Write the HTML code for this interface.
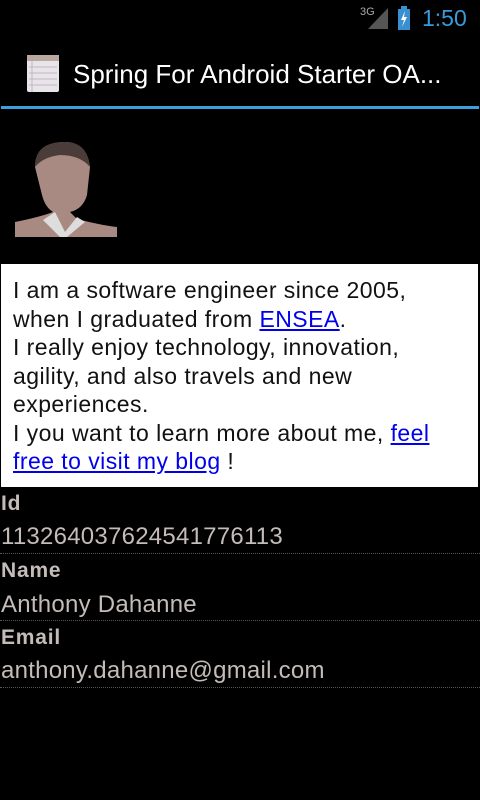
<!DOCTYPE html>
<html><head><style>
body{margin:0;width:480px;height:800px;background:#000;overflow:hidden;font-family:"Liberation Sans",sans-serif;position:relative}
.a{position:absolute;white-space:nowrap}
.box{position:absolute;left:1px;top:264px;width:477px;height:223px;background:#fff}
.box p{margin:0;position:absolute;left:12px;top:12px;font-size:23px;line-height:28.5px;color:#111;white-space:nowrap;letter-spacing:0.45px}
.box a{color:#0000ee;text-decoration:underline}
.lab{font-size:21px;font-weight:bold;color:#c4bcb8;left:1px;letter-spacing:0.8px}
.val{font-size:24px;color:#c4bcb8;left:1px;letter-spacing:0.25px}
.dot{position:absolute;left:0;width:480px;border-top:1px dotted #555}
</style></head><body>
<div class="a" style="left:360px;top:6px;font-size:11px;color:#aaa">3G</div>
<svg class="a" style="left:367px;top:7px" width="22" height="22"><polygon points="21,1 21,22 1,22" fill="#555"/></svg>
<svg class="a" style="left:397px;top:6px" width="14" height="24"><rect x="4" y="0" width="6" height="3" fill="#3a8fd0"/><rect x="1" y="3" width="12" height="21" fill="#3a8fd0"/><path d="M8 5 L4 14 L7 14 L5 21 L10 11 L7 11 Z" fill="#fff"/></svg>
<div class="a" style="left:422px;top:5px;font-size:23px;color:#3a9ad9">1:50</div>
<svg class="a" style="left:27px;top:55px" width="33" height="38"><rect x="0" y="0" width="32" height="37" rx="2" fill="#e8e4ea"/><rect x="0" y="0" width="32" height="6" fill="#b8a8a0"/><g stroke="#bbb" stroke-width="1"><line x1="2" y1="12" x2="30" y2="12"/><line x1="2" y1="18" x2="30" y2="18"/><line x1="2" y1="24" x2="30" y2="24"/><line x1="2" y1="30" x2="30" y2="30"/><line x1="5" y1="6" x2="5" y2="37"/></g></svg>
<div class="a" style="left:73px;top:59px;font-size:26px;color:#fff">Spring For Android Starter OA...</div>
<div class="a" style="left:1px;top:106px;width:478px;height:3px;background:#3aa0dc"></div>
<svg class="a" style="left:15px;top:137px" width="102" height="100"><path d="M20 30 Q20 5 50 5 Q72 5 75 30 L72 58 Q68 72 55 75 L62 82 Q85 88 102 90 L102 100 L0 100 L0 85 Q25 80 38 75 Q30 70 27 58 Z" fill="#a88a82"/><path d="M20 30 Q20 5 50 5 Q72 5 75 30 Q65 18 45 18 Q28 20 20 30Z" fill="#4a3c38"/><path d="M28 83 L40 75 L50 95 L62 80 L70 85 L52 100 L45 100 Z" fill="#ddd"/></svg>
<div class="box"><p>I am a software engineer since 2005,<br>when I graduated from <a>ENSEA</a>.<br>I really enjoy technology, innovation,<br>agility, and also travels and new<br>experiences.<br>I you want to learn more about me, <a>feel</a><br><a>free to visit my blog</a> !</p></div>
<div class="a lab" style="top:492px">Id</div>
<div class="a val" style="top:523px">113264037624541776113</div>
<div class="dot" style="top:553px"></div>
<div class="a lab" style="top:559px">Name</div>
<div class="a val" style="top:591px">Anthony Dahanne</div>
<div class="dot" style="top:620px"></div>
<div class="a lab" style="top:626px">Email</div>
<div class="a val" style="top:657px">anthony.dahanne@gmail.com</div>
<div class="dot" style="top:687px"></div>
</body></html>
